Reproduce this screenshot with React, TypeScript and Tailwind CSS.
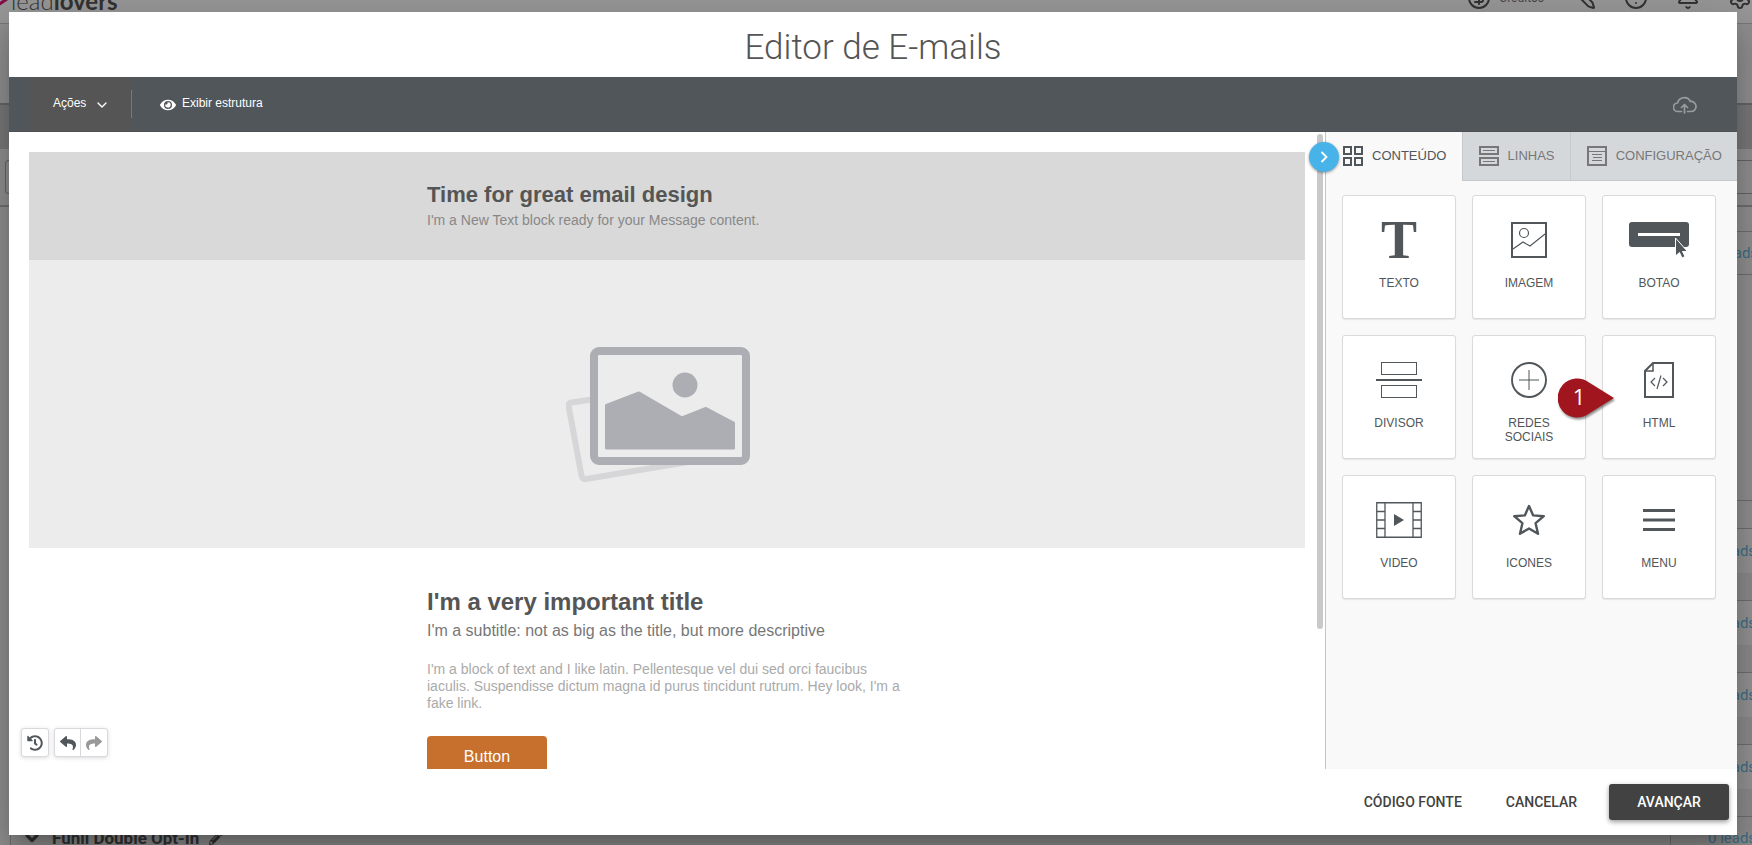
import { useState } from "react"
import type { ReactNode } from "react"
import { Bell, CircleDollarSign, CircleHelp, Pencil, Settings, ChevronDown } from "lucide-react"
import { FaEye, FaHistory, FaPencilAlt, FaReply, FaShare } from "react-icons/fa"

type Block = { label: string; icon: ReactNode; marker?: string }

const INK = "#505659"

const TextIcon = () => (
  <span aria-hidden className="block h-9 font-['Liberation_Serif',serif] text-[54px] leading-9 font-bold text-[#505659]">T</span>
)

const ImageIcon = () => (
  <svg width="36" height="36" viewBox="0 0 36 36" fill="none" stroke={INK}>
    <rect x="1" y="1" width="34" height="34" strokeWidth="2" />
    <circle cx="13" cy="11" r="4.5" strokeWidth="1.2" />
    <path d="M2 27l10-7 7 4 15-12" strokeWidth="1.2" />
  </svg>
)

const ButtonIcon = () => (
  <svg width="60" height="36" viewBox="0 0 60 36">
    <rect width="60" height="25" rx="3" fill={INK} />
    <rect x="9" y="11" width="42" height="3" fill="#fff" />
    <path d="M46.5 16v18l4-3.500 2.500 5.500 3-1.500-2.500-5h5z" fill={INK} stroke="#fff" strokeWidth="1" />
  </svg>
)

const DividerIcon = () => (
  <svg width="46" height="36" viewBox="0 0 46 36" fill="none" stroke={INK}>
    <rect x="5.5" y="0.5" width="35" height="12" />
    <rect x="5.5" y="23.500" width="35" height="12" />
    <path d="M0 18h46" strokeWidth="2" />
  </svg>
)

const SocialIcon = () => (
  <svg width="36" height="36" viewBox="0 0 36 36" fill="none" stroke={INK}>
    <circle cx="18" cy="18" r="17" strokeWidth="1.900" />
    <path d="M18 8v20M8 18h20" strokeWidth="1" />
  </svg>
)

const HtmlIcon = () => (
  <svg width="30" height="36" viewBox="0 0 30 36" fill="none" stroke={INK}>
    <path d="M9 1h20v34H1V9z" strokeWidth="2" />
    <path d="M9 1v8H1" strokeWidth="1.500" />
    <path d="M11 16l-4 4 4 4M19 16l4 4-4 4M17 13.500l-4 13.500" strokeWidth="1.200" />
  </svg>
)

const VideoIcon = () => (
  <svg width="46" height="36" viewBox="0 0 46 36" fill="none" stroke={INK}>
    <path d="M.75.75h44.500v34.500H.750zM9 1v34M37 1v34M1 9.500h8M1 18h8M1 26.500h8M37 9.500h8M37 18h8M37 26.500h8" strokeWidth="1.300" />
    <path d="M18 12v12l10-6z" fill={INK} stroke="none" />
  </svg>
)

const StarIcon = () => (
  <svg width="36" height="36" viewBox="0 0 36 36" fill="none" stroke={INK} strokeWidth="2.400" strokeLinejoin="round">
    <path d="M18 4l4.200 9.400L32.800 14.200l-8.200 7L27 31.800l-9-5.300-9 5.300 2.400-10.600-8.200-7 10.600-.8z" />
  </svg>
)

const MenuIcon = () => (
  <svg width="32" height="36" viewBox="0 0 32 36" stroke={INK} strokeWidth="3">
    <path d="M0 8.500h32M0 18h32M0 27.500h32" />
  </svg>
)

const BLOCKS: Block[] = [
  { label: "TEXTO", icon: <TextIcon /> },
  { label: "IMAGEM", icon: <ImageIcon /> },
  { label: "BOTAO", icon: <ButtonIcon /> },
  { label: "DIVISOR", icon: <DividerIcon /> },
  { label: "REDES SOCIAIS", icon: <SocialIcon /> },
  { label: "HTML", icon: <HtmlIcon />, marker: "1" },
  { label: "VIDEO", icon: <VideoIcon /> },
  { label: "ICONES", icon: <StarIcon /> },
  { label: "MENU", icon: <MenuIcon /> },
]

const TABS = [
  {
    id: "content",
    label: "CONTEÚDO",
    icon: <path d="M1 1h7v7H1zM12 1h7v7h-7zM1 12h7v7H1zM12 12h7v7h-7z" strokeWidth="2" />,
  },
  {
    id: "rows",
    label: "LINHAS",
    icon: (
      <>
        <path d="M1 1h18v7H1zM1 12h18v7H1z" strokeWidth="2" />
        <path d="M4 4.500h12M4 15.500h12" />
      </>
    ),
  },
  {
    id: "settings",
    label: "CONFIGURAÇÃO",
    icon: (
      <>
        <path d="M1 1h18v18H1z" strokeWidth="2" />
        <path d="M2 5.500h16M5 8.500h10M6 11.500h9M5 14.500h10" />
      </>
    ),
  },
]

function Placeholder() {
  return (
    <svg width="184" height="135" viewBox="0 0 184 135" fill="none" role="img" aria-label="Imagem">
      <path d="M26 52.500L5.500 55.500Q2 56 2.700 59.500L15.500 128.500Q16.500 132.500 20 132L122 115" stroke="#d6d6d8" strokeWidth="6" />
      <rect x="28" y="4" width="152" height="110" rx="5" fill="#ececec" stroke="#adaeb3" strokeWidth="8" />
      <circle cx="119" cy="38" r="12.500" fill="#adaeb3" />
      <path
        d="M40.500 58.500L73 46l43 25 24-9.500L167.500 76v25H40.500z"
        fill="#adaeb3"
        stroke="#adaeb3"
        strokeWidth="3"
        strokeLinejoin="round"
      />
    </svg>
  )
}

// Campaign page that stays visible around the edges of the dialog
function PageBehind() {
  return (
    <div className="fixed inset-0 flex flex-col overflow-hidden bg-[#f2f2f2] font-[Roboto,sans-serif] text-[#555]">
      <header className="-mt-7 flex h-[52px] shrink-0 items-center justify-between border-b border-[#ccc] bg-white">
        <div className="flex items-center pt-1.5 font-[Lato,sans-serif] text-[24px] leading-7 text-[#555]">
          <svg className="h-7 w-[11px] overflow-visible" viewBox="0 0 11 28" fill="none" stroke="#e0157a" strokeWidth="3">
            <path d="M-3 8l10-3v7l-9 6" />
          </svg>
          <span className="font-light">lead</span>
          <span className="font-bold">lovers</span>
        </div>
        <div className="flex items-center gap-7 text-[#555]">
          <span className="flex items-center gap-2 text-[12px] leading-4 text-[#777]">
            <CircleDollarSign className="size-6 text-[#555]" /> Créditos
          </span>
          <Pencil className="size-6 -scale-x-100" />
          <CircleHelp className="size-6" />
          <Bell className="size-6" />
          <Settings className="size-6" />
        </div>
      </header>
      <div className="h-[81px] shrink-0 border-b-2 border-[#aaa]" />
      <div className="h-11 shrink-0 bg-[#ccc]" />
      <div className="h-[58px] shrink-0 border-b-2 border-[#bbb] pt-[11px] pl-[5px]">
        <div className="h-[34px] rounded-l-sm border border-r-0 border-[#aaa]" />
      </div>
      <div className="mt-6 ml-[10px] flex h-11 shrink-0 items-center justify-end border-y border-[#bbb]">
        <span className="w-[42px] text-[15px] leading-5 whitespace-nowrap text-[#6bb8e0]">0 leads</span>
      </div>
      <div className="mt-[225px] ml-[10px] h-7 shrink-0 border-t border-l border-[#bbb]" />
      {[0, 1, 2, 3].map((row) => (
        <div key={row} className="ml-[10px] flex h-18 shrink-0 flex-col border-t border-l border-[#bbb]">
          <div className="flex h-11 items-center justify-end bg-[#f8f8f8]">
            <span className="w-[44px] text-[15px] leading-5 whitespace-nowrap text-[#6bb8e0]">0 leads</span>
          </div>
          <div className="flex-1 bg-[#ececec]" />
        </div>
      ))}
      <div className="ml-[10px] flex h-[42px] shrink-0 items-center justify-between border-t border-l border-[#bbb] bg-[#ededed]">
        <h2 className="flex items-center gap-[10px] pl-[11px] text-[17px] leading-5 font-bold">
          <ChevronDown className="size-5" strokeWidth={4} />
          Funil Double Opt-In
          <FaPencilAlt className="size-3.5" />
        </h2>
        <div className="flex h-full w-[82px] items-center border-l border-[#bbb] pl-[37px] text-[15px] leading-5 whitespace-nowrap text-[#6bb8e0]">
          0 leads
        </div>
      </div>
    </div>
  )
}

function BlockCard({ block }: { block: Block }) {
  return (
    <button
      type="button"
      className="relative flex h-[124px] flex-col items-center gap-[18px] rounded-[3px] border border-[#dadada] bg-white px-6 pt-[26px] text-[12px] leading-[14px] text-[#505659] shadow-[0_1px_1px_rgba(0,0,0,0.08)]"
    >
      {block.icon}
      <span>{block.label}</span>
      {block.marker && (
        <span className="absolute top-[42px] -left-[45px] flex h-10 w-[56px] items-center">
          <svg width="56" height="40" viewBox="0 0 56 40" className="absolute inset-0 drop-shadow-[1px_2px_1px_rgba(0,0,0,0.45)]">
            <path d="M56 20L31 4.500A19.500 19.500 0 1 0 31 35.500z" fill="#a1161e" />
          </svg>
          <span className="relative w-[42px] pb-1 text-center font-['Open_Sans',sans-serif] text-[22px] leading-6 text-white">{block.marker}</span>
        </span>
      )}
    </button>
  )
}

export default function App() {
  const [tab, setTab] = useState("content")

  return (
    <div className="min-h-screen">
      <PageBehind />
      <div className="fixed inset-0 flex bg-black/40 pt-3 pr-[15px] pb-[10px] pl-[9px]">
        <div
          role="dialog"
          aria-labelledby="editor-title"
          className="flex min-w-0 flex-1 flex-col bg-white shadow-[0_11px_15px_-7px_rgba(0,0,0,0.2),0_24px_38px_3px_rgba(0,0,0,0.14),0_9px_46px_8px_rgba(0,0,0,0.12)]"
        >
          <h1 id="editor-title" className="pt-[15px] pb-[9px] text-center font-[Roboto,sans-serif] text-[35px] leading-[41px] font-light text-[#555]">
            Editor de E-mails
          </h1>

          {/* Toolbar */}
          <div className="flex h-[55px] shrink-0 items-center border-b border-[#505055] bg-[#505659] pr-10 pl-5 font-['Liberation_Sans',Arial,sans-serif] text-[12px] leading-4 text-white">
            <button type="button" className="flex h-full w-[102px] items-center gap-2 bg-[#555] pb-0.5 pl-6">
              Ações
              <ChevronDown className="mt-1 size-4" />
            </button>
            <span className="h-7 w-px bg-[#74797b]" />
            <button type="button" className="flex items-center gap-1.5 pb-0.5 pl-7">
              <FaEye className="mt-1 size-4" />
              Exibir estrutura
            </button>
            <button type="button" aria-label="Salvar" className="ml-auto pt-0.5 text-[#999d9f]">
              <svg width="24" height="18" viewBox="0 0 24 18" fill="none" stroke="currentColor" strokeWidth="1.700" strokeLinecap="round" strokeLinejoin="round">
                <path d="M8.500 15.500H5A4.200 4.200 0 0 1 4.500 7 7 7 0 0 1 17.500 5.500 5 5 0 0 1 18.500 15.500H14.500M11.500 17V8.500M8.500 11.500l3-3 3 3" />
              </svg>
            </button>
          </div>

          <div className="flex min-h-0 flex-1 font-['Liberation_Sans',Arial,sans-serif]">
            {/* Canvas */}
            <main className="relative flex min-w-0 flex-1 overflow-hidden">
              <div className="min-w-0 flex-1 pt-5 pl-5">
                <section className="bg-[#d9d9d9]">
                  <div className="mx-auto h-[108px] w-[480px] pt-[30px]">
                    <h2 className="text-[22px] leading-[26px] font-bold text-[#555]">Time for great email design</h2>
                    <p className="mt-1 text-[14px] leading-[17px] text-[#888]">I'm a New Text block ready for your Message content.</p>
                  </div>
                </section>
                <section className="flex h-72 items-center justify-center bg-[#ececec] pt-5 pr-[18px]">
                  <Placeholder />
                </section>
                <section className="mx-auto w-[480px] pt-[39px]">
                  <h2 className="text-[24px] leading-[29px] font-bold text-[#555]">I'm a very important title</h2>
                  <p className="mt-1 text-[16px] leading-[22px] text-[#777]">I'm a subtitle: not as big as the title, but more descriptive</p>
                  <p className="mt-[19px] text-[14px] leading-[17px] text-[#aaa]">
                    I'm a block of text and I like latin. Pellentesque vel dui sed orci faucibus iaculis. Suspendisse dictum magna id purus
                    tincidunt rutrum. Hey look, I'm a fake link.
                  </p>
                  <a href="#" className="mt-6 block h-[42px] w-[120px] rounded-[4px] bg-[#c7702e] text-center text-[16px] leading-[42px] text-white">
                    Button
                  </a>
                </section>
              </div>
              <div className="w-5 shrink-0 pt-0.5 pl-3">
                <div className="h-[78%] w-[6px] rounded-full bg-[#c9c9c9]" />
              </div>

              <div className="absolute bottom-3 left-3 flex gap-[5px] text-[#505659]">
                <button type="button" aria-label="Histórico" className="flex h-[29px] w-7 items-center justify-center rounded-[3px] border border-[#d9d9dd] bg-white shadow-[0_1px_4px_rgba(0,0,0,0.15)]">
                  <FaHistory className="size-4" />
                </button>
                <div className="flex h-[29px] rounded-[3px] border border-[#d9d9dd] bg-white shadow-[0_1px_4px_rgba(0,0,0,0.15)]">
                  <button type="button" aria-label="Desfazer" className="flex w-[26px] items-center justify-center border-r border-[#d9d9dd]">
                    <FaReply className="size-4" />
                  </button>
                  <button type="button" aria-label="Refazer" disabled className="flex w-[26px] items-center justify-center text-[#999]">
                    <FaShare className="size-4" />
                  </button>
                </div>
              </div>
            </main>

            {/* Sidebar */}
            <aside className="relative w-[412px] shrink-0 border-l border-[#c4c4c4] bg-[#f9f9f9]">
              <button
                type="button"
                aria-label="Recolher painel"
                className="absolute top-[10px] -left-[17px] flex size-[30px] items-center justify-center rounded-full bg-[#48b3e8] text-white shadow-[0_1px_3px_rgba(0,0,0,0.4)]"
              >
                <svg width="8" height="12" viewBox="0 0 8 12" fill="none" stroke="currentColor" strokeWidth="1.800">
                  <path d="M1.500 1l5 5-5 5" />
                </svg>
              </button>
              <div role="tablist" className="flex h-[49px]">
                {TABS.map((t) => (
                  <button
                    key={t.id}
                    type="button"
                    role="tab"
                    aria-selected={tab === t.id}
                    onClick={() => setTab(t.id)}
                    className={`flex flex-auto items-center gap-[9px] pr-[15px] pb-px text-[13px] leading-4 ${tab === t.id ? "pl-[17px] text-[#505659]" : "border-b border-l border-[#c6c9cc] bg-[#d5d8db] pl-4 text-[#777]"}`}
                  >
                    <svg width="20" height="20" viewBox="0 0 20 20" fill="none" stroke="currentColor" className="shrink-0">
                      {t.icon}
                    </svg>
                    {t.label}
                  </button>
                ))}
              </div>
              <div className="grid grid-cols-3 gap-4 pt-[14px] pr-[21px] pl-4">
                {BLOCKS.map((b) => (
                  <BlockCard key={b.label} block={b} />
                ))}
              </div>
            </aside>
          </div>

          <footer className="flex h-[66px] shrink-0 items-center justify-end gap-3 pr-2 font-[Roboto,sans-serif] text-[14px] leading-5 font-medium text-[#424242]">
            <button type="button" className="h-9 px-4">CÓDIGO FONTE</button>
            <button type="button" className="mr-1 h-9 px-4">CANCELAR</button>
            <button type="button" className="h-9 w-[120px] rounded-[3px] bg-[#424242] text-white shadow-[0_2px_5px_rgba(0,0,0,0.4)]">
              AVANÇAR
            </button>
          </footer>
        </div>
      </div>
    </div>
  )
}
